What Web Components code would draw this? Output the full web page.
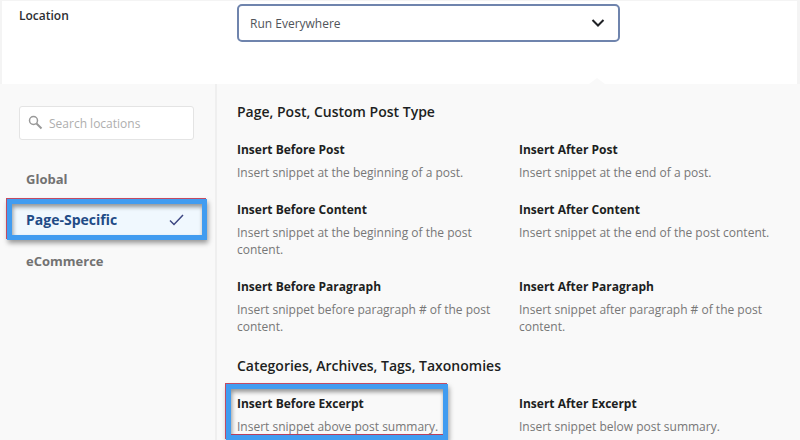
<!DOCTYPE html>
<html lang="en">
<head>
<meta charset="utf-8">
<title>Snippet location</title>
<style>
  body { margin: 0; background: #f9f9f9; font-family: "Open Sans", "Noto Sans", sans-serif; font-size: 12px; color: #1d1f22; }
</style>
</head>
<body>
<location-page></location-page>

<script>
const define = (name, html, setup) => {
  const template = document.createElement('template');
  template.innerHTML = '<style>*{box-sizing:border-box}</style>' + html;
  customElements.define(name, class extends HTMLElement {
    constructor() {
      super();
      this.attachShadow({ mode: 'open' }).append(template.content.cloneNode(true));
    }
    connectedCallback() { if (setup) setup(this, this.shadowRoot); }
  });
};

/* Blue marker frame laid over the element it is placed in. */
define('marker-frame', `
<style>
  :host { position: absolute; inset: var(--marker-inset, 0); border: 5px solid #419cf0; pointer-events: none;
    box-shadow: -1px -1px 0 #c34a62, 1px 3px 5px rgba(0,0,0,.4), inset 1px 3px 4px rgba(0,0,0,.4); }
  :host([underline])::after { content: ""; position: absolute; left: 0; right: 0; bottom: 0; height: 1px; background: #b8405c; }
</style>`);

define('location-select', `
<style>
  :host { display: grid; grid-template-columns: 235px minmax(0, 383px); padding: 3px 0 42px; background: #fff;
    border: solid #f4f4f4; border-width: 1px 3px 0 2px; position: relative; }
  label { padding: 3px 0 0 17px; font-size: 12px; line-height: 18px; font-weight: 600; color: #2c2e31; }
  .field { position: relative; }
  select { display: block; appearance: none; width: 100%; height: 38px; padding: 0 36px 0 11px; border: 2px solid #6f84ad; border-radius: 5px;
    background: #fff; font: inherit; font-size: 12px; color: #50545a; }
  svg { position: absolute; right: 15px; top: 14px; width: 14px; height: 10px; pointer-events: none; }
  .notch { position: absolute; right: 192px; bottom: 0; border: solid transparent; border-width: 0 8px 6px; border-bottom-color: #f9f9f9; }
</style>
<label for="where">Location</label>
<div class="field">
  <select id="where"><option>Run Everywhere</option></select>
  <svg viewBox="0 0 14 10" fill="none" stroke="#202226" stroke-width="2"><path d="M1.5 2 7 7.5 12.5 2"/></svg>
</div>
<span class="notch"></span>`);

define('search-box', `
<style>
  :host { display: block; position: relative; }
  input { display: block; width: 100%; height: 34px; padding: 0 8px 0 29px; border: 1px solid #e4e4e4; border-radius: 3px;
    background: #fff; font: inherit; font-size: 12px; color: #555; }
  input::placeholder { color: #aeaeae; opacity: 1; }
  svg { position: absolute; left: 9px; top: 9px; width: 15px; height: 15px; }
</style>
<svg viewBox="0 0 15 15" fill="none" stroke="#999" stroke-width="1.5"><circle cx="5.5" cy="5.5" r="4"/><path d="m8.5 8.5 5 5" stroke-width="2"/></svg>
<input type="search" placeholder="Search locations" aria-label="Search locations">`);

define('nav-item', `
<style>
  :host { display: block; position: relative; --marker-inset: 0 -6px 0 0; }
  button { display: flex; align-items: center; justify-content: space-between; width: 100%; height: 41px; padding: 0 17px 0 19px;
    border: 0; background: none; font: inherit; font-size: 13px; font-weight: 700; color: #727272; text-align: left; }
  svg, marker-frame { display: none; }
  :host([selected]) button { background: #f0f8fe; color: #1f4b86; font-size: 14px; }
  :host([selected]) svg { display: block; width: 15px; height: 12px; }
  :host([selected]) marker-frame { display: block; }
</style>
<button type="button"><slot></slot><svg viewBox="0 0 15 12" fill="none" stroke="#3c4682" stroke-width="1.5"><path d="m1 6.5 4 4L14 1"/></svg></button>
<marker-frame></marker-frame>`);

define('snippet-option', `
<style>
  :host { display: block; position: relative; --marker-inset: -10px 47px -5px -11px; }
  h3 { margin: 0 0 4px; font-size: 12px; line-height: 20px; font-weight: 700; color: #1d1f22; }
  p { margin: 0; font-size: 12px; line-height: 17px; color: #777; }
  marker-frame { display: none; }
  :host([marked]) marker-frame { display: block; }
</style>
<marker-frame underline></marker-frame>
<h3></h3><p><slot></slot></p>`, (el, root) => { root.querySelector('h3').textContent = el.getAttribute('name'); });

define('option-group', `
<style>
  :host { display: block; }
  h2 { margin: 0 0 16px; font-size: 14px; line-height: 24px; font-weight: 600; color: #1d1f22; }
  div { display: grid; grid-template-columns: 1fr 1fr; gap: 19px 24px; }
</style>
<h2></h2><div><slot></slot></div>`, (el, root) => { root.querySelector('h2').textContent = el.getAttribute('heading'); });

define('location-page', `
<style>
  :host { display: flex; flex-direction: column; min-height: 100vh; }
  .body { display: grid; grid-template-columns: 217px minmax(0, 1fr); flex: 1; }
  aside { border-right: 2px solid #efefef; padding: 22px 14px 0 7px; }
  search-box { margin: 0 7px 18px 12px; }
  main { display: flex; flex-direction: column; gap: 19px; padding: 16px 23px 5px 20px; }
</style>
<location-select></location-select>
<div class="body">
  <aside>
    <search-box></search-box>
    <nav>
      <nav-item>Global</nav-item>
      <nav-item selected>Page-Specific</nav-item>
      <nav-item>eCommerce</nav-item>
    </nav>
  </aside>
  <main>
    <option-group heading="Page, Post, Custom Post Type">
      <snippet-option name="Insert Before Post">Insert snippet at the beginning of a post.</snippet-option>
      <snippet-option name="Insert After Post">Insert snippet at the end of a post.</snippet-option>
      <snippet-option name="Insert Before Content">Insert snippet at the beginning of the post content.</snippet-option>
      <snippet-option name="Insert After Content">Insert snippet at the end of the post content.</snippet-option>
      <snippet-option name="Insert Before Paragraph">Insert snippet before paragraph # of the post content.</snippet-option>
      <snippet-option name="Insert After Paragraph">Insert snippet after paragraph # of the post content.</snippet-option>
    </option-group>
    <option-group heading="Categories, Archives, Tags, Taxonomies">
      <snippet-option name="Insert Before Excerpt" marked>Insert snippet above post summary.</snippet-option>
      <snippet-option name="Insert After Excerpt">Insert snippet below post summary.</snippet-option>
    </option-group>
  </main>
</div>`);
</script>
</body>
</html>
